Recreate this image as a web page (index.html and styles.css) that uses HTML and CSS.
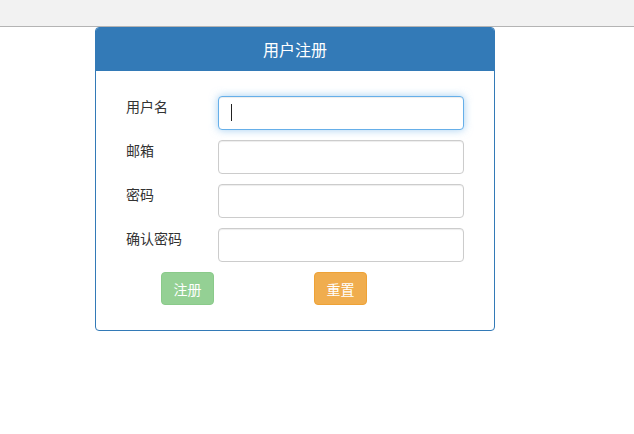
FILE: index.html
```html
<!DOCTYPE html>
<html lang="zh-CN">
<head>
    <meta charset="UTF-8">
    <meta name="viewport" content="width=device-width, initial-scale=1.0">
    <title>用户注册</title>
    <link rel="stylesheet" href="styles.css">
</head>
<body>
    <div class="topbar"></div>
    <div class="panel">
        <div class="panel-heading">用户注册</div>
        <form class="panel-body" id="regForm">
            <div class="form-row">
                <label for="username">用户名</label>
                <span class="field active"><input type="text" id="username" name="username"></span>
            </div>
            <div class="form-row">
                <label for="email">邮箱</label>
                <span class="field"><input type="email" id="email" name="email"></span>
            </div>
            <div class="form-row">
                <label for="pwd">密码</label>
                <span class="field"><input type="password" id="pwd" name="pwd"></span>
            </div>
            <div class="form-row">
                <label for="pwd2">确认密码</label>
                <span class="field"><input type="password" id="pwd2" name="pwd2"></span>
            </div>
            <div class="actions">
                <button type="submit" class="btn btn-success" disabled>注册</button>
                <button type="reset" class="btn btn-warning">重置</button>
            </div>
        </form>
    </div>
</body>
</html>
```

FILE: styles.css
```css
body {
    margin: 0;
    font-family: "Noto Sans CJK SC", "Liberation Sans", sans-serif;
    font-size: 14px;
    color: #333;
    background: #fff;
}
.topbar {
    height: 26px;
    background: #f2f2f2;
    border-bottom: 1px solid #b4b4b4;
}
.panel {
    width: 398px;
    margin-left: 95px;
    border: 1px solid #337ab7;
    border-radius: 4px;
    background: #fff;
}
.panel-heading {
    height: 43px;
    line-height: 42px;
    background: #337ab7;
    color: #fff;
    text-align: center;
    font-size: 16px;
    border-radius: 3px 3px 0 0;
}
.panel-body {
    padding: 25px 30px 25px 30px;
    display: flex;
    flex-direction: column;
    gap: 10px;
}
.form-row {
    display: flex;
    align-items: flex-start;
}
.form-row label {
    width: 92px;
    line-height: 20px;
    padding-left: 0;
    box-sizing: border-box;
}
.field {
    position: relative;
    display: block;
}
.field input {
    display: block;
    width: 246px;
    height: 34px;
    box-sizing: border-box;
    border: 1px solid #ccc;
    border-radius: 4px;
    padding: 6px 12px;
    font-size: 14px;
    font-family: inherit;
    box-shadow: inset 0 1px 1px rgba(0,0,0,.075);
    outline: none;
}
.field.active input {
    border-color: #66afe9;
    box-shadow: inset 0 1px 1px rgba(0,0,0,.075), 0 0 8px rgba(102,175,233,.6);
}
.field.active::after {
    content: "";
    position: absolute;
    left: 13px;
    top: 8px;
    width: 1px;
    height: 17px;
    background: #222;
}
.actions {
    display: flex;
    gap: 100px;
    padding-left: 35px;
}
.btn {
    width: 53px;
    height: 33px;
    border: 1px solid transparent;
    border-radius: 4px;
    color: #fff;
    font-size: 14px;
    font-family: inherit;
    padding: 0;
    cursor: pointer;
}
.btn-success {
    background: #5cb85c;
    border-color: #4cae4c;
    opacity: .65;
    cursor: not-allowed;
}
.btn-warning {
    background: #f0ad4e;
    border-color: #eea236;
}
```
